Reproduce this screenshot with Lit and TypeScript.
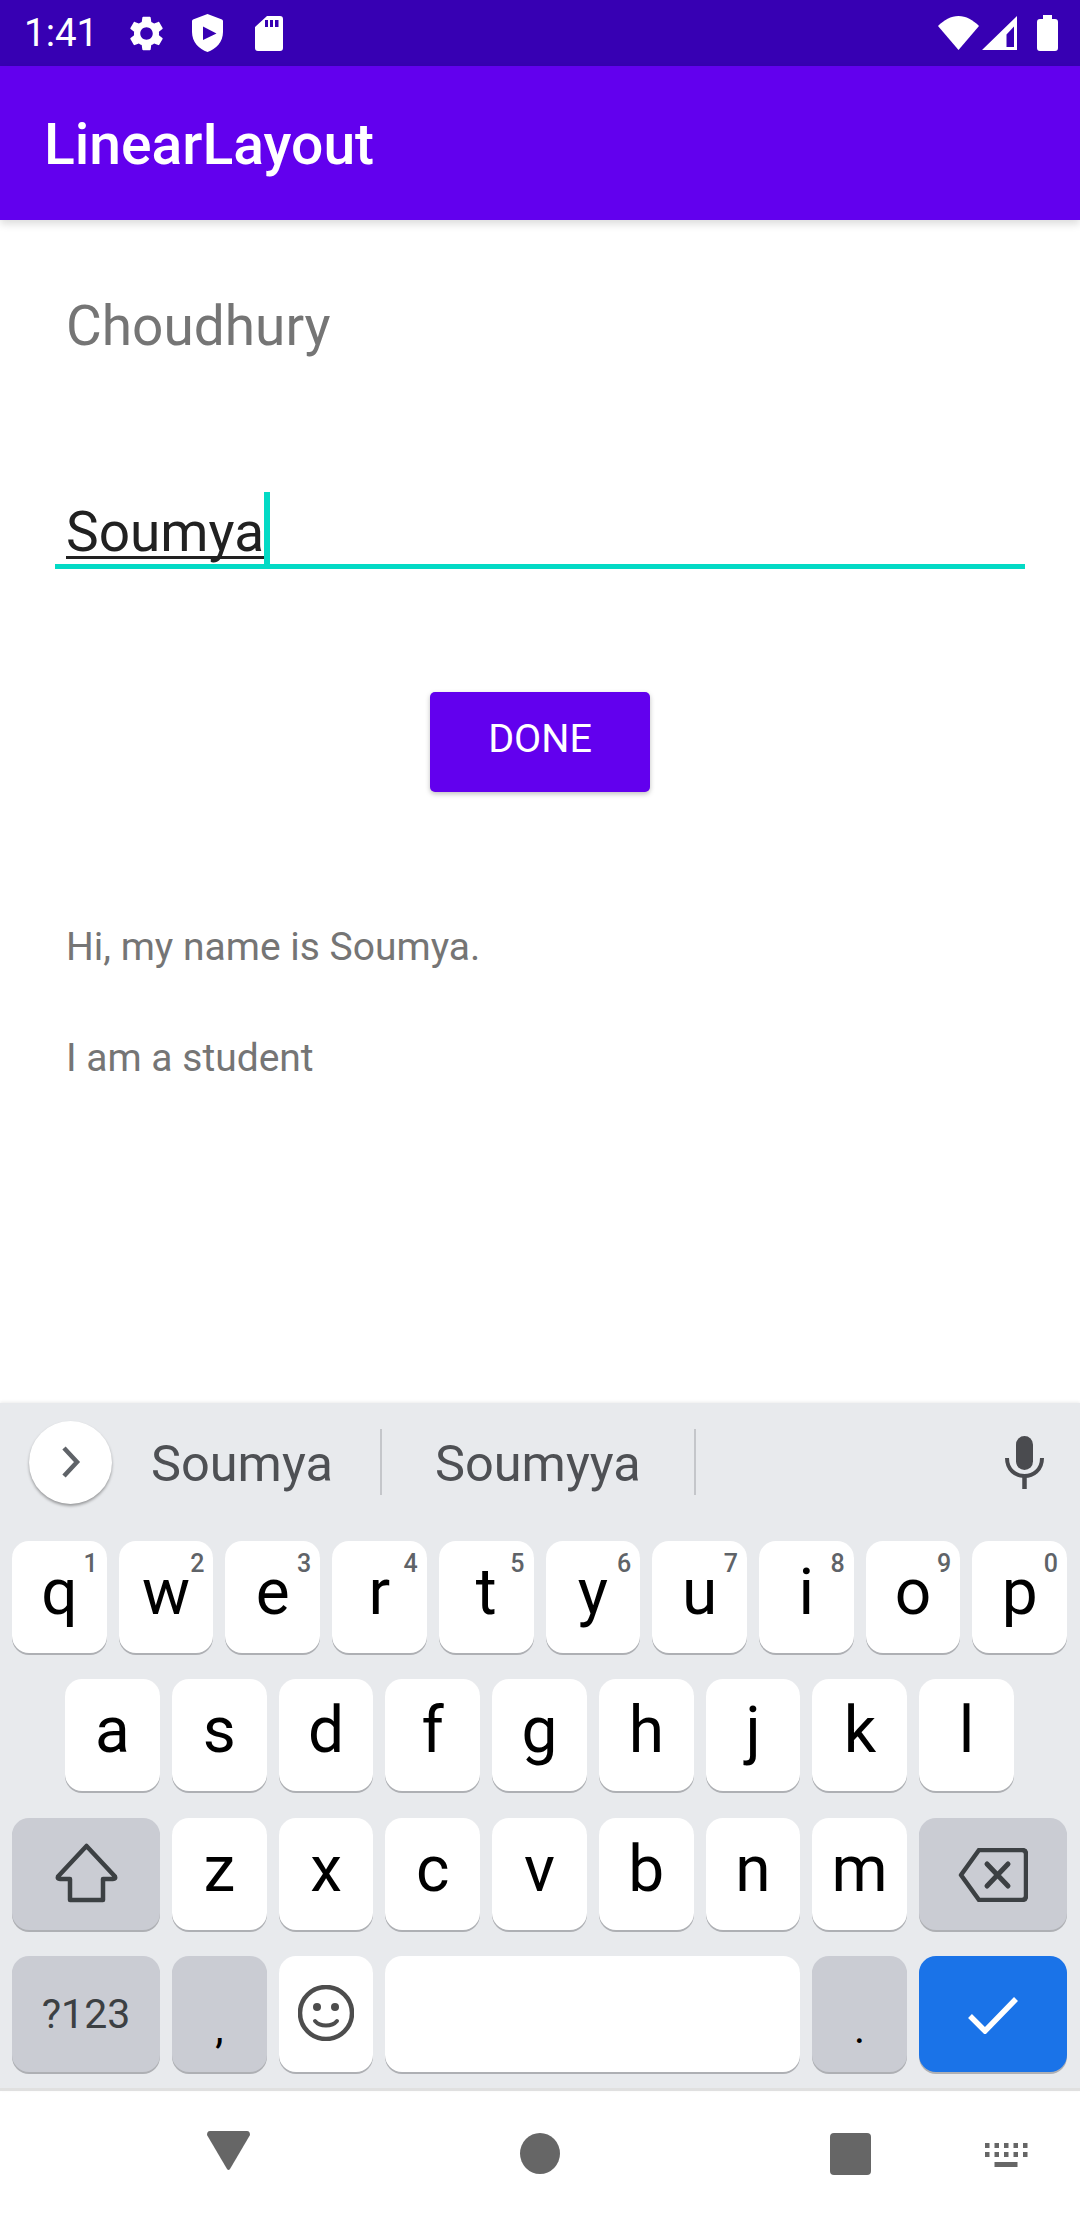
import { LitElement, html, css, svg } from 'lit';
import { customElement } from 'lit/decorators.js';

const GEAR = 'M19.14 12.94c.04-.3.06-.61.06-.94 0-.32-.02-.64-.07-.94l2.03-1.58c.18-.14.23-.41.12-.61l-1.92-3.32c-.12-.22-.37-.29-.59-.22l-2.39.96c-.5-.38-1.03-.7-1.62-.94l-.36-2.54c-.04-.24-.24-.41-.48-.41h-3.84c-.24 0-.43.17-.47.41l-.36 2.54c-.59.24-1.13.57-1.62.94l-2.39-.96c-.22-.08-.47 0-.59.22L2.74 8.87c-.12.21-.08.47.12.61l2.03 1.58c-.05.3-.09.63-.09.94s.02.64.07.94l-2.03 1.58c-.18.14-.23.41-.12.61l1.92 3.32c.12.22.37.29.59.22l2.39-.96c.5.38 1.03.7 1.62.94l.36 2.54c.05.24.24.41.48.41h3.84c.24 0 .44-.17.47-.41l.36-2.54c.59-.24 1.13-.56 1.62-.94l2.39.96c.22.08.47 0 .59-.22l1.92-3.32c.12-.22.07-.47-.12-.61l-2.01-1.58zM12 15.6c-1.98 0-3.6-1.62-3.6-3.6s1.62-3.6 3.6-3.6 3.6 1.62 3.6 3.6-1.62 3.6-3.6 3.6z';

const ROW1 = [['q', '1'], ['w', '2'], ['e', '3'], ['r', '4'], ['t', '5'], ['y', '6'], ['u', '7'], ['i', '8'], ['o', '9'], ['p', '0']];
const ROW2 = ['a', 's', 'd', 'f', 'g', 'h', 'j', 'k', 'l'];
const ROW3 = ['z', 'x', 'c', 'v', 'b', 'n', 'm'];

@customElement('app-root')
export class AppRoot extends LitElement {
  static styles = css`
    :host {
      display: block;
      width: 1080px;
      height: 2220px;
      background: white;
      font-family: Roboto, sans-serif;
      overflow: hidden;
    }
    .page {
      display: flex;
      flex-direction: column;
      height: 2220px;
    }
    svg {
      display: block;
      flex: none;
    }

    /* status bar */
    .status {
      height: 66px;
      flex: none;
      background: #3700b3;
      color: white;
      display: flex;
      align-items: center;
      padding-left: 24px;
      font-size: 38.5px;
    }
    .time {
      width: 106px;
      line-height: 66px;
    }
    .status .shield { margin-left: 29px; }
    .status .sd { margin-left: 32px; }
    .status .wifi { margin-left: auto; }
    .status .signal { margin-left: 3px; }
    .status .battery { margin-left: 20px; margin-right: 22px; }

    .appbar {
      height: 154px;
      flex: none;
      box-sizing: border-box;
      padding: 2px 0 0 44px;
      background: #6200ee;
      color: white;
      display: flex;
      align-items: center;
      font-size: 57px;
      font-weight: 500;
      box-shadow: 0 4px 8px rgba(0, 0, 0, 0.14);
      position: relative;
    }

    /* form */
    .content {
      flex: 1;
      display: flex;
      flex-direction: column;
      padding-top: 68px;
    }
    .hint {
      padding-left: 66px;
      font-size: 55px;
      line-height: 76px;
      color: #757575;
    }
    .input {
      margin: 128px 0 0 55px;
      width: 970px;
      height: 72px;
      border-bottom: 5px solid #03dac5;
      display: flex;
      align-items: flex-start;
    }
    .input .text {
      margin-left: 11px;
      font-size: 55px;
      line-height: 80px;
      color: #212121;
      text-decoration: underline;
      text-decoration-thickness: 3px;
      text-underline-offset: 5px;
      text-decoration-skip-ink: none;
    }
    .caret {
      width: 6px;
      height: 72px;
      background: #03dac5;
      flex: none;
    }
    .done {
      align-self: center;
      margin-top: 123px;
      width: 220px;
      height: 100px;
      box-sizing: border-box;
      padding-bottom: 8px;
      border-radius: 5px;
      background: #6200ee;
      color: white;
      font-size: 39.5px;
      display: flex;
      align-items: center;
      justify-content: center;
      box-shadow: 0 2px 5px rgba(0, 0, 0, 0.25);
    }
    .line {
      padding-left: 66px;
      font-size: 39px;
      line-height: 50px;
      color: #757575;
    }
    .line.first { margin-top: 130px; }
    .line.second { margin-top: 61px; }

    /* keyboard */
    .keyboard {
      height: 688px;
      flex: none;
      box-sizing: border-box;
      background: #e8eaed;
      border-bottom: 3px solid #e0e0e0;
      box-shadow: 0 -1px 3px rgba(0, 0, 0, 0.08);
      position: relative;
    }
    .strip {
      height: 138px;
      box-sizing: border-box;
      padding-bottom: 20px;
      display: flex;
      align-items: center;
      color: #4e5054;
      font-size: 50.5px;
    }
    .more {
      margin-left: 29px;
      width: 83px;
      height: 83px;
      border-radius: 50%;
      background: white;
      box-shadow: 0 2px 3px rgba(0, 0, 0, 0.35);
      display: flex;
      align-items: center;
      justify-content: center;
      flex: none;
    }
    .sugg {
      height: 66px;
      line-height: 70px;
      box-sizing: border-box;
    }
    .sugg.a { width: 270px; padding-left: 39px; border-right: 2px solid #c4c6ca; }
    .sugg.b { width: 314px; padding-left: 53px; border-right: 2px solid #c4c6ca; }
    .mic { margin: 0 36px 0 auto; }
    .row {
      display: flex;
      gap: 12px;
      padding: 0 13px 0 12px;
      height: 112px;
    }
    .row.two { padding: 0 66px 0 65px; margin-top: 26px; }
    .row.three { margin-top: 27px; }
    .row.four { margin-top: 26px; height: 116px; }
    .key {
      flex: 1 1 0;
      min-width: 0;
      position: relative;
      background: white;
      border-radius: 17px;
      box-shadow: 0 2px 0 #aeb0b4;
      color: black;
      font-size: 64px;
      line-height: 60px;
      padding-top: 22px;
      box-sizing: border-box;
      display: flex;
      justify-content: center;
      align-items: flex-start;
    }
    .key.wide { flex: 0 0 148px; }
    .key.dark { background: #caccd3; }
    .key.fixed { flex: 0 0 94.7px; }
    .key.space { flex: 1 1 0; }
    .key.enter { background: #1a73e8; }
    .key.sym { color: #3c4043; font-size: 41px; line-height: 40px; padding-top: 38px; }
    .key.punct { font-size: 42px; line-height: 42px; padding-top: 52px; }
    .num {
      position: absolute;
      top: 10px;
      right: 9px;
      font-size: 25px;
      font-weight: 500;
      line-height: 25px;
      color: #5f6368;
    }

    /* nav bar */
    .nav {
      height: 129px;
      flex: none;
      display: flex;
      align-items: flex-start;
      padding-left: 207px;
    }
    .nav .back { margin-top: 40px; }
    .nav .home { margin: 42px 0 0 270px; }
    .nav .recent { margin: 42px 0 0 270px; }
    .nav .kbd { margin: 52px 0 0 114px; }
  `;

  private icon(cls: string, w: number, h: number, box: string, body: unknown) {
    return html`<svg class=${cls} width=${w} height=${h} viewBox=${box}>${body}</svg>`;
  }

  private statusIcons() {
    return html`
      ${this.icon('gear', 33, 35, '2.5 2 19 20', svg`<path fill="white" d=${GEAR}/>`)}
      ${this.icon('shield', 31, 38, '0 0 31 38', svg`<path fill="white" fill-rule="evenodd" d="M15.5 0 L30 5.5 Q31 6 31 7 V18 C31 28 24 35 15.5 38 C7 35 0 28 0 18 V7 Q0 6 1 5.5 Z M11 12.5 V26 L24.5 19.5 Z"/>`)}
      ${this.icon('sd', 28, 35, '0 0 28 35', svg`<path fill="white" fill-rule="evenodd" d="M12 0 H25 a3 3 0 0 1 3 3 V32 a3 3 0 0 1 -3 3 H3 a3 3 0 0 1 -3 -3 V11 Z M10 4 V11 H13 V4 Z M15 4 V11 H18 V4 Z M20 4 V11 H23.5 V4 Z"/>`)}
    `;
  }

  private systemIcons() {
    return html`
      ${this.icon('wifi', 41, 34, '0 0 41 34', svg`<path fill="white" d="M20.5 34 L0 10 C6 4 13 0 20.5 0 C28 0 35 4 41 10 Z"/>`)}
      ${this.icon('signal', 35, 34, '0 0 35 34', svg`<path fill="white" fill-rule="evenodd" d="M35 0 V34 H0 Z M24.5 18.5 V31 H32 V10.5 Z"/>`)}
      ${this.icon('battery', 21, 36, '0 0 21 36', svg`<path fill="white" d="M6 0 H15 V4 H18 a3 3 0 0 1 3 3 V33 a3 3 0 0 1 -3 3 H3 a3 3 0 0 1 -3 -3 V7 a3 3 0 0 1 3 -3 H6 Z"/>`)}
    `;
  }

  private strip() {
    return html`
      <div class="strip">
        <div class="more">
          ${this.icon('', 20, 32, '0 0 20 32', svg`<path d="M3 2 L16 16 L3 30" fill="none" stroke="#5f6368" stroke-width="4.5"/>`)}
        </div>
        <div class="sugg a">Soumya</div>
        <div class="sugg b">Soumyya</div>
        ${this.icon('mic', 39, 53, '0 0 39 53', svg`
          <rect x="11" y="0" width="17" height="34" rx="8.5" fill="#4a4b4f"/>
          <path d="M2 22 C2 46 37 46 37 22" fill="none" stroke="#4a4b4f" stroke-width="4"/>
          <path d="M19.5 40 V53" fill="none" stroke="#4a4b4f" stroke-width="4.5"/>`)}
      </div>
    `;
  }

  private keys() {
    return html`
      <div class="row">
        ${ROW1.map(([k, n]) => html`<div class="key">${k}<span class="num">${n}</span></div>`)}
      </div>
      <div class="row two">
        ${ROW2.map((k) => html`<div class="key">${k}</div>`)}
      </div>
      <div class="row three">
        <div class="key wide dark" style="padding-top:24px">
          ${this.icon('', 65, 62, '-2 -2 65 62', svg`<path d="M30.5 2 L59 32.5 Q60 35 57 35 H47 V56 H14 V35 H4 Q1 35 2 32.5 Z" fill="none" stroke="#3c4043" stroke-width="4.5" stroke-linejoin="round"/>`)}
        </div>
        ${ROW3.map((k) => html`<div class="key">${k}</div>`)}
        <div class="key wide dark" style="padding-top:30px">
          ${this.icon('', 70, 54, '0 0 70 54', svg`
            <path d="M21 2 H64 Q68 2 68 6 V48 Q68 52 64 52 H21 L3 27 Z" fill="none" stroke="#3c4043" stroke-width="4.5" stroke-linejoin="round"/>
            <path d="M29 16 L50 38 M50 16 L29 38" fill="none" stroke="#3c4043" stroke-width="5" stroke-linecap="round"/>`)}
        </div>
      </div>
      <div class="row four">
        <div class="key wide dark sym">?123</div>
        <div class="key fixed dark punct">,</div>
        <div class="key fixed" style="padding-top:29px">
          ${this.icon('', 56, 56, '0 0 56 56', svg`
            <circle cx="28" cy="28" r="26" fill="none" stroke="#4d4d4d" stroke-width="4.5"/>
            <circle cx="19" cy="22" r="4" fill="#4d4d4d"/>
            <circle cx="37" cy="22" r="4" fill="#4d4d4d"/>
            <path d="M17 36 C22 42 34 42 39 36" fill="none" stroke="#4d4d4d" stroke-width="4" stroke-linecap="round"/>`)}
        </div>
        <div class="key space"></div>
        <div class="key fixed dark punct">.</div>
        <div class="key wide enter" style="padding-top:40px">
          ${this.icon('', 50, 38, '0 0 50 38', svg`<path d="M2 20 L17 35 L48 3" fill="none" stroke="white" stroke-width="5.5"/>`)}
        </div>
      </div>
    `;
  }

  private nav() {
    return html`
      <div class="nav">
        ${this.icon('back', 43, 39, '0 0 43 39', svg`<path fill="#666" d="M3 0 H40 Q43 0 43 4 L23 38 Q21.5 40 20 38 L0 4 Q0 0 3 0 Z"/>`)}
        <svg class="home" width="40" height="41" viewBox="0 0 40 41"><ellipse cx="20" cy="20.5" rx="20" ry="20.5" fill="#666"/></svg>
        <svg class="recent" width="41" height="42" viewBox="0 0 41 42"><rect width="41" height="42" rx="4" fill="#666"/></svg>
        ${this.icon('kbd', 43, 24, '0 0 43 24', svg`
          ${[0, 9.5, 19, 28.5, 38].map((x) => svg`<rect x=${x} y="0" width="4.5" height="5" fill="#666"/><rect x=${x} y="9" width="4.5" height="5" fill="#666"/>`)}
          <rect x="9.5" y="19" width="23" height="5" fill="#666"/>`)}
      </div>
    `;
  }

  render() {
    return html`
      <div class="page">
        <div class="status">
          <span class="time">1:41</span>
          ${this.statusIcons()}
          ${this.systemIcons()}
        </div>
        <div class="appbar">LinearLayout</div>
        <div class="content">
          <div class="hint">Choudhury</div>
          <div class="input"><span class="text">Soumya</span><span class="caret"></span></div>
          <div class="done">DONE</div>
          <div class="line first">Hi, my name is Soumya.</div>
          <div class="line second">I am a student</div>
        </div>
        <div class="keyboard">
          ${this.strip()}
          ${this.keys()}
        </div>
        ${this.nav()}
      </div>
    `;
  }
}
